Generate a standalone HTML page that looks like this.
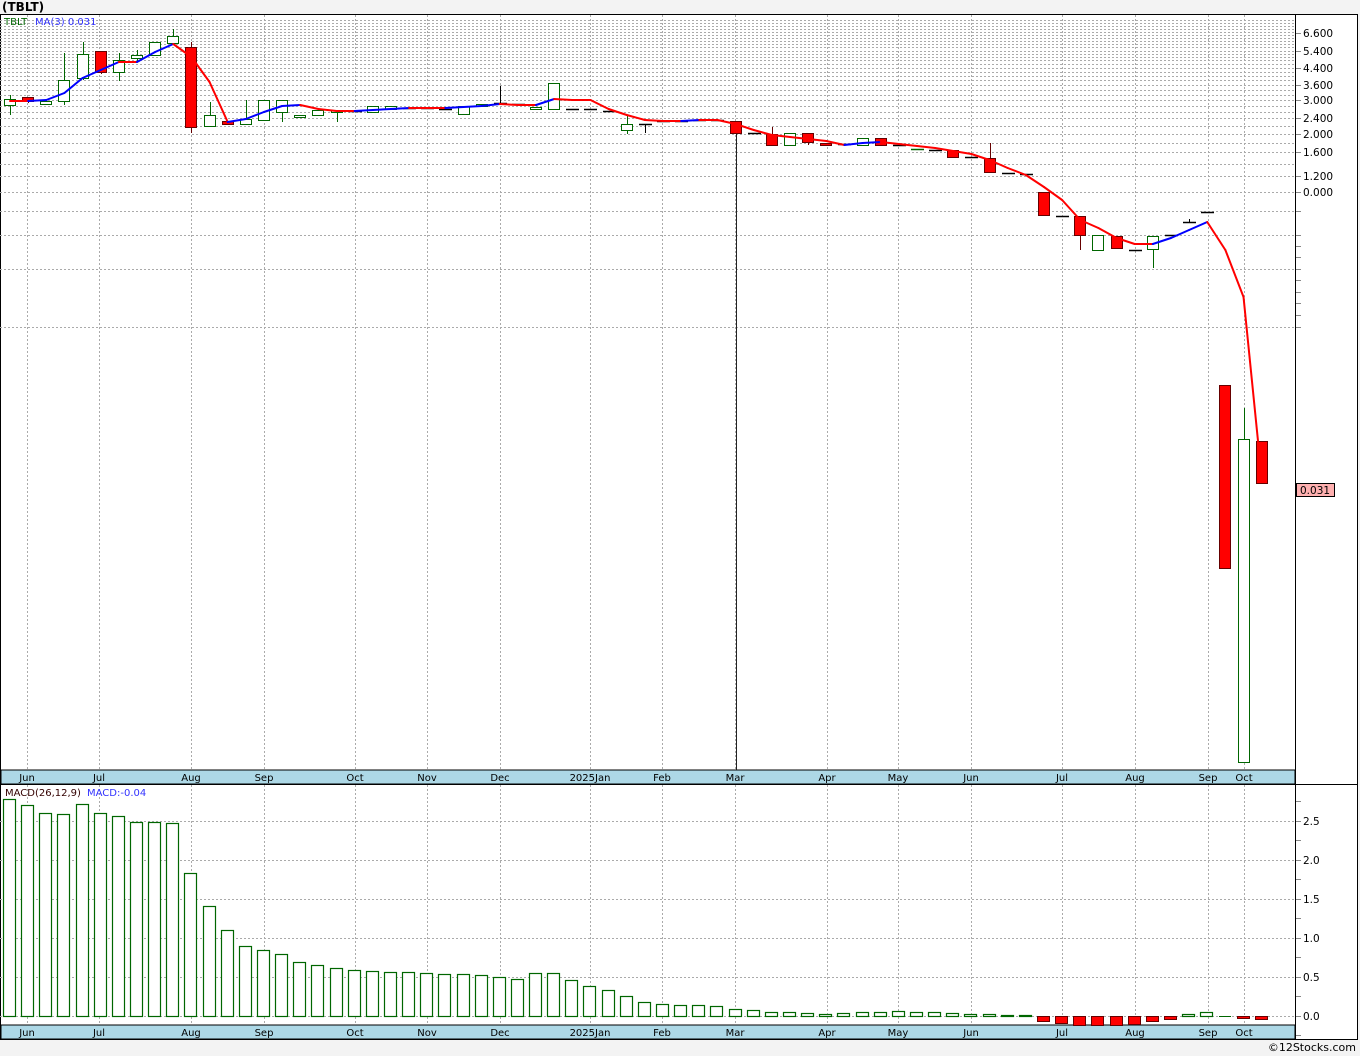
<!DOCTYPE html>
<html><head><meta charset="utf-8"><style>
body{margin:0;width:1360px;height:1056px;background:#f3f3f3;overflow:hidden;font-family:"DejaVu Sans","Liberation Sans",sans-serif}
#t{position:absolute;left:2px;top:0;font:bold 12px "DejaVu Sans",sans-serif}
#f{position:absolute;right:4px;top:1041px;font-size:11px}
svg{position:absolute;left:0;top:0}
</style></head><body>
<div id="t">(TBLT)</div>
<svg id="s" width="1360" height="1056" xmlns="http://www.w3.org/2000/svg" font-family="DejaVu Sans, Liberation Sans, sans-serif"></svg>
<div id="f">©12Stocks.com</div>
<script>
var s=document.getElementById('s'),h='';
h+='<rect x="0.5" y="14.5" width="1357" height="1025" fill="#fff" stroke="#000"/>';
var months=[[27,'Jun'],[99,'Jul'],[191,'Aug'],[264,'Sep'],[355,'Oct'],[427,'Nov'],[500,'Dec'],[590,'2025Jan'],[662,'Feb'],[735,'Mar'],[827,'Apr'],[898,'May'],[971,'Jun'],[1062,'Jul'],[1135,'Aug'],[1208,'Sep'],[1244,'Oct']];
var g='stroke="#aaa" stroke-dasharray="2,2" stroke-width="1"';
var hy=[20,23,26,29,32,35,38,41,44,47,51,54,57,60,64,68,72,76,80,85,90,95,100,106,112,118,126,134,143,152,164,176,192,211,235,269,327];
hy.forEach(function(y){h+='<line x1="0" x2="1295" y1="'+(y+.5)+'" y2="'+(y+.5)+'" '+g+'/>';});
[821,860,899,938,977,1016].forEach(function(y){h+='<line x1="0" x2="1295" y1="'+(y+.5)+'" y2="'+(y+.5)+'" '+g+'/>';});
months.forEach(function(m){var x=m[0]+.5;h+='<line x1="'+x+'" x2="'+x+'" y1="15" y2="770" '+g+'/><line x1="'+x+'" x2="'+x+'" y1="785" y2="1025" '+g+'/>';});
h+='<rect x="1" y="770" width="1294" height="14" fill="#add8e6" stroke="#000"/><rect x="1" y="1025" width="1294" height="14" fill="#add8e6" stroke="#000"/>';
h+='<line x1="0" x2="1358" y1="784.5" y2="784.5" stroke="#000"/><line x1="1295.5" x2="1295.5" y1="14" y2="1040" stroke="#000"/>';
months.forEach(function(m){h+='<text x="'+m[0]+'" y="781" font-size="10" text-anchor="middle">'+m[1]+'</text><text x="'+m[0]+'" y="1036" font-size="10" text-anchor="middle">'+m[1]+'</text>';});
[[33,'6.600'],[51,'5.400'],[68,'4.400'],[85,'3.600'],[100,'3.000'],[118,'2.400'],[134,'2.000'],[152,'1.600'],[176,'1.200'],[192,'0.000']].forEach(function(a){h+='<line x1="1296" x2="1301" y1="'+(a[0]+.5)+'" y2="'+(a[0]+.5)+'" stroke="#888"/><text x="1303" y="'+(a[0]+4)+'" font-size="10.5">'+a[1]+'</text>';});
[211,235,246,257,269,280,292,303,315,327].forEach(function(y){h+='<line x1="1296" x2="1301" y1="'+(y+.5)+'" y2="'+(y+.5)+'" stroke="#888"/>';});
[[821,'2.5'],[860,'2.0'],[899,'1.5'],[938,'1.0'],[977,'0.5'],[1016,'0.0']].forEach(function(a){h+='<line x1="1296" x2="1301" y1="'+(a[0]+.5)+'" y2="'+(a[0]+.5)+'" stroke="#888"/><text x="1303" y="'+(a[0]+4)+'" font-size="10.5">'+a[1]+'</text>';});
[801,840,879,918,957,996,1035].forEach(function(y){h+='<line x1="1296" x2="1301" y1="'+(y+.5)+'" y2="'+(y+.5)+'" stroke="#888"/>';});
var C=[[99,105,95,115,'w'],[97,101,97,103,'r'],[101,104,101,104,'w'],[80,101,53,105,'w'],[54,78,42,80,'w'],[51,72,51,74,'r'],[60,72,53,81,'w'],[55,58,50,62,'w'],[42,55,42,55,'w'],[36,43,29,43,'w'],[47,127,42,133,'r'],[115,126,102,126,'w'],[121,124,121,125,'r'],[119,124,100,124,'w'],[100,120,100,120,'w'],[100,112,100,122,'w'],[115,117,115,117,'w'],[110,115,110,115,'w'],[110,112,110,122,'w'],[111,111,111,111,'d'],[106,112,106,112,'w'],[106,109,106,109,'w'],[108,108,108,108,'d'],[108,108,108,108,'d'],[109,109,109,109,'d'],[106,114,106,114,'w'],[104,106,104,106,'w'],[103,103,86,103,'d'],[104,104,104,104,'d'],[107,109,107,109,'w'],[83,109,83,109,'w'],[109,109,109,109,'d'],[109,109,109,109,'d'],[111,111,111,111,'d'],[124,130,116,134,'w'],[124,124,124,133,'d'],[121,121,121,121,'d'],[121,121,121,121,'d'],[120,120,120,120,'d'],[120,120,120,120,'d'],[121,133,121,770,'r'],[133,133,133,133,'d'],[134,145,127,145,'r'],[133,145,133,145,'w'],[133,142,133,145,'r'],[143,145,143,145,'r'],[144,144,144,144,'d'],[138,145,138,145,'w'],[138,145,138,145,'r'],[145,145,145,145,'d'],[149,149,149,149,'g'],[150,150,150,150,'d'],[150,157,150,157,'r'],[157,157,157,157,'d'],[158,172,143,172,'r'],[173,173,173,173,'d'],[174,174,174,174,'d'],[192,215,192,216,'r'],[216,216,216,216,'d'],[216,235,216,250,'r'],[235,250,235,250,'w'],[236,248,236,248,'r'],[250,250,250,250,'d'],[236,249,236,268,'w'],[235,235,235,235,'d'],[222,222,219,222,'d'],[212,212,212,212,'d'],[385,568,385,568,'r'],[439,762,408,762,'w'],[441,483,441,483,'r']];
function X(i){return 10+18.14*i;}
C.forEach(function(c,i){var x=Math.round(X(i));
 if(c[4]=='d'||c[4]=='g'){var col=c[4]=='g'?'#060':'#000';if(c[2]<c[0]||c[3]>c[1])h+='<line x1="'+(x+.5)+'" x2="'+(x+.5)+'" y1="'+c[2]+'" y2="'+c[3]+'" stroke="'+col+'"/>';h+='<line x1="'+(x-6)+'" x2="'+(x+7)+'" y1="'+(c[0]+.5)+'" y2="'+(c[0]+.5)+'" stroke="'+col+'" stroke-width="1.5"/>';return;}
 var r=c[4]=='r',sc=r?'#600':'#060';
 h+='<line x1="'+(x+.5)+'" x2="'+(x+.5)+'" y1="'+c[2]+'" y2="'+c[3]+'" stroke="'+(i==40?'#222':sc)+'"/>';
 h+='<rect x="'+(x-5.5)+'" y="'+(c[0]+.5)+'" width="11" height="'+Math.max(2,c[1]-c[0])+'" fill="'+(r?'#f00':'#fff')+'" stroke="'+sc+'"/>';});
var M=[101,101,100,93,78,70,62,62,52,44,57,82,122,119,112,106,105,109,111,111,110,109,108,108,108,107,106,104,105,105,99,100,100,109,115,120,121,121,120,120,124,130,135,137,139,141,145,143,142,144,146,148,151,154,160,168,175,187,200,220,228,238,244,244,238,230,222,250,297,441];
for(var i=1;i<M.length;i++){var x1=X(i-1),x2=i==M.length-1?1258:X(i);h+='<line x1="'+x1+'" y1="'+M[i-1]+'" x2="'+x2+'" y2="'+M[i]+'" stroke="'+(M[i]<M[i-1]?'#00f':'#f00')+'" stroke-width="2" stroke-linecap="round"/>';}
var B=[799,805,813,814,804,813,816,822,822,823,873,906,930,946,950,954,962,965,968,970,971,972,972,973,974,974,975,977,979,973,973,980,986,990,996,1002,1004,1005,1005,1006,1009,1010,1012,1012,1013,1014,1013,1012,1012,1011,1012,1012,1013,1014,1014,1015,1015,1021,1023,1025,1025,1025,1024,1021,1019,1014,1012,1016,1018,1019];
B.forEach(function(b,i){var x=Math.round(X(i));if(i==67){h+='<line x1="'+(x-6)+'" x2="'+(x+6)+'" y1="1016.5" y2="1016.5" stroke="#060"/>';return;}
 if(b<1016)h+='<rect x="'+(x-6.5)+'" y="'+(b+.5)+'" width="12" height="'+(1016-b)+'" fill="#fff" stroke="#060" stroke-width="1.2"/>';
 else h+='<rect x="'+(x-6.5)+'" y="1016.5" width="12" height="'+Math.max(2,b-1016)+'" fill="#f00" stroke="#600"/>';});
h+='<text x="4" y="25" font-size="10" fill="#060">TBLT</text><text x="35" y="25" font-size="10" fill="#33f">MA(3)  0.031</text>';
h+='<text x="5" y="796" font-size="10" fill="#300">MACD(26,12,9)</text><text x="87" y="796" font-size="10" fill="#33f">MACD:-0.04</text>';
h+='<rect x="1296.5" y="483.5" width="38" height="13" fill="#ffb0b0" stroke="#000"/><text x="1300" y="494" font-size="10.5">0.031</text>';
s.innerHTML=h;
</script>
</body></html>
